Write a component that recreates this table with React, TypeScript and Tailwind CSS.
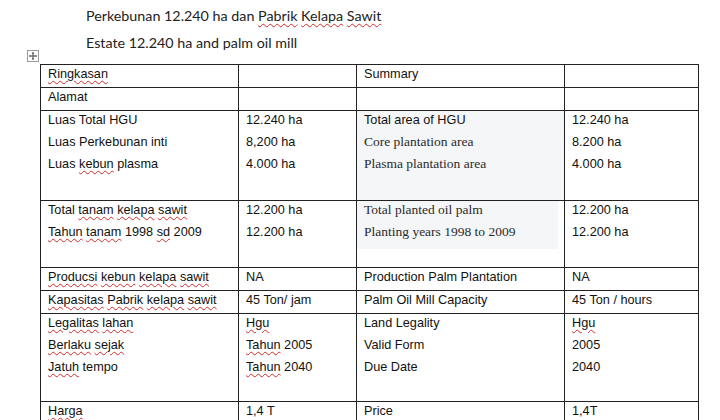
import { ReactNode } from "react";

// red squiggle, like Word's spell check
function W({ children }: { children: ReactNode }) {
  return (
    <span className="underline decoration-wavy decoration-[#d42a2a] decoration-1 underline-offset-[2px]">
      {children}
    </span>
  );
}

function Line({ children, serif }: { children?: ReactNode; serif?: boolean }) {
  return (
    <div
      className={
        serif
          ? "h-[22px] whitespace-nowrap font-['Liberation_Serif',serif] text-[13.5px] leading-[18px] text-[#2a2a2a]"
          : "h-[22px] whitespace-nowrap leading-[18px]"
      }
    >
      {children}
    </div>
  );
}

function MoveHandle() {
  return (
    <svg width="12" height="12" viewBox="0 0 12 12" className="absolute -left-[13px] -top-[14px]">
      <rect x="0.5" y="0.5" width="11" height="11" fill="#fff" stroke="#9a9a9a" />
      <path d="M6 2.5v7M2.5 6h7" stroke="#444" strokeWidth="1" />
      <path d="M6 2l-1.3 1.4h2.6zM6 10l-1.3-1.4h2.6zM2 6l1.4-1.3v2.6zM10 6l-1.4-1.3v2.6z" fill="#444" />
    </svg>
  );
}

const td = "border border-[#222] align-top pl-[7px] pt-0";

export default function App() {
  return (
    <div className="h-[420px] w-[720px] overflow-hidden bg-white font-['Liberation_Sans',Arial,sans-serif] text-[12.7px] text-[#111]">
      <div className="pl-[86px] pt-[6px] font-['Lato',sans-serif] text-[14.3px] text-[#222]">
        <p className="h-[27px] leading-[20px]">
          Perkebunan 12.240 ha dan <W>Pabrik</W> <W>Kelapa</W> <W>Sawit</W>
        </p>
        <p className="h-[31px] leading-[20px]">Estate 12.240 ha and palm oil mill</p>
      </div>

      <div className="relative ml-[40px] w-[658px]">
        <MoveHandle />
        <table className="w-[658px] table-fixed border-collapse">
          <colgroup>
            <col className="w-[198px]" />
            <col className="w-[118px]" />
            <col className="w-[208px]" />
            <col className="w-[134px]" />
          </colgroup>
          <tbody>
            <tr className="h-[23px]">
              <td className={td}><Line><W>Ringkasan</W></Line></td>
              <td className={td}></td>
              <td className={td}><Line>Summary</Line></td>
              <td className={td}></td>
            </tr>
            <tr className="h-[21px]">
              <td className={td}><Line>Alamat</Line></td>
              <td className={td}></td>
              <td className={td}></td>
              <td className={td}></td>
            </tr>
            <tr className="h-[90px]">
              <td className={td}>
                <Line>Luas Total HGU</Line>
                <Line>Luas Perkebunan inti</Line>
                <Line>Luas <W>kebun</W> plasma</Line>
              </td>
              <td className={td}>
                <Line>12.240 ha</Line>
                <Line>8,200 ha</Line>
                <Line>4.000 ha</Line>
              </td>
              <td className={td + " bg-[#f5f6f8]"}>
                <Line>Total area of HGU</Line>
                <Line serif>Core plantation area</Line>
                <Line serif>Plasma plantation area</Line>
              </td>
              <td className={td}>
                <Line>12.240 ha</Line>
                <Line>8.200 ha</Line>
                <Line>4.000 ha</Line>
              </td>
            </tr>
            <tr className="h-[67px]">
              <td className={td}>
                <Line>Total <W>tanam</W> <W>kelapa</W> <W>sawit</W></Line>
                <Line><W>Tahun</W> <W>tanam</W> 1998 <W>sd</W> 2009</Line>
              </td>
              <td className={td}>
                <Line>12.200 ha</Line>
                <Line>12.200 ha</Line>
              </td>
              <td className={td + " !pl-0"}>
                <div className="h-[48px] w-[201px] bg-[#f5f6f8] pl-[7px]">
                  <Line serif>Total planted oil palm</Line>
                  <Line serif>Planting years 1998 to 2009</Line>
                </div>
              </td>
              <td className={td}>
                <Line>12.200 ha</Line>
                <Line>12.200 ha</Line>
              </td>
            </tr>
            <tr className="h-[23px]">
              <td className={td}><Line><W>Producsi</W> <W>kebun</W> <W>kelapa</W> <W>sawit</W></Line></td>
              <td className={td}><Line>NA</Line></td>
              <td className={td}><Line>Production Palm Plantation</Line></td>
              <td className={td}><Line>NA</Line></td>
            </tr>
            <tr className="h-[23px]">
              <td className={td}><Line><W>Kapasitas</W> <W>Pabrik</W> <W>kelapa</W> <W>sawit</W></Line></td>
              <td className={td}><Line>45 Ton/ jam</Line></td>
              <td className={td}><Line>Palm Oil Mill Capacity</Line></td>
              <td className={td}><Line>45 Ton / hours</Line></td>
            </tr>
            <tr className="h-[88px]">
              <td className={td}>
                <Line><W>Legalitas</W> <W>lahan</W></Line>
                <Line><W>Berlaku</W> <W>sejak</W></Line>
                <Line><W>Jatuh</W> tempo</Line>
              </td>
              <td className={td}>
                <Line><W>Hgu</W></Line>
                <Line><W>Tahun</W> 2005</Line>
                <Line><W>Tahun</W> 2040</Line>
              </td>
              <td className={td}>
                <Line>Land Legality</Line>
                <Line>Valid Form</Line>
                <Line>Due Date</Line>
              </td>
              <td className={td}>
                <Line><W>Hgu</W></Line>
                <Line>2005</Line>
                <Line>2040</Line>
              </td>
            </tr>
            <tr className="h-[23px]">
              <td className={td}><Line><W>Harga</W></Line></td>
              <td className={td}><Line>1,4 T</Line></td>
              <td className={td}><Line>Price</Line></td>
              <td className={td}><Line>1,4T</Line></td>
            </tr>
          </tbody>
        </table>
      </div>
    </div>
  );
}
